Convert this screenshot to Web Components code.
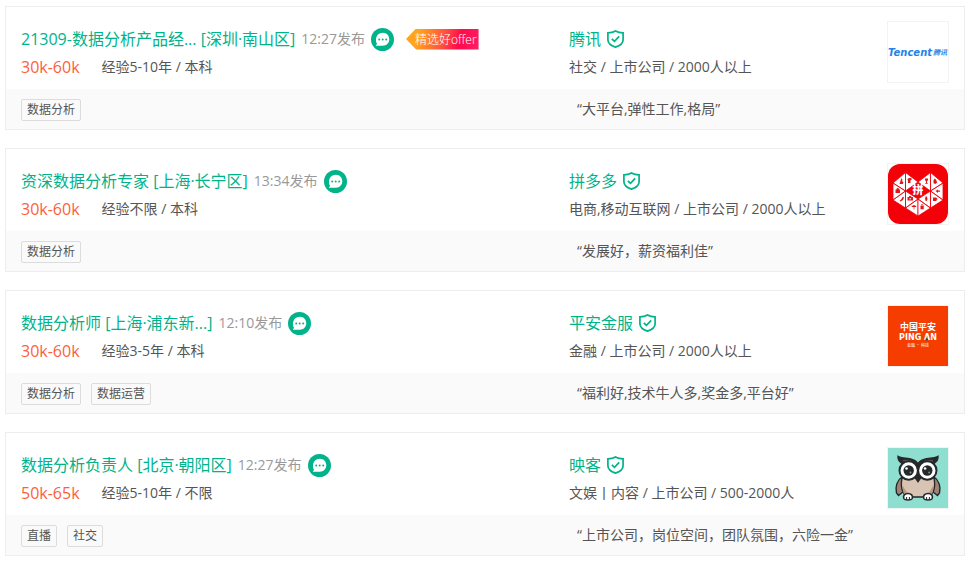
<!DOCTYPE html>
<html lang="zh-CN">
<head>
<meta charset="utf-8">
<title>数据分析职位</title>
<style>
    body {
        margin: 6px 13px 10px 5px;
        background: #fff;
        color: #555;
        font: 400 14px/24px "Open Sans", "Noto Sans CJK SC", sans-serif;
    }
</style>
</head>
<body>

<job-list>
    <job-card salary="30k-60k" time="12:27发布" badge="精选好offer">
        <span slot="title">21309-数据分析产品经... [深圳·南山区]</span>
        <span slot="require">经验5-10年 / 本科</span>
        <span slot="company">腾讯</span>
        <span slot="industry">社交 / 上市公司 / 2000人以上</span>
        <company-logo slot="logo" name="tencent"></company-logo>
        <job-tag slot="tags">数据分析</job-tag>
        <span slot="benefit">“大平台,弹性工作,格局”</span>
    </job-card>
    <job-card salary="30k-60k" time="13:34发布">
        <span slot="title">资深数据分析专家 [上海·长宁区]</span>
        <span slot="require">经验不限 / 本科</span>
        <span slot="company">拼多多</span>
        <span slot="industry">电商,移动互联网 / 上市公司 / 2000人以上</span>
        <company-logo slot="logo" name="pinduoduo"></company-logo>
        <job-tag slot="tags">数据分析</job-tag>
        <span slot="benefit">“发展好，薪资福利佳”</span>
    </job-card>
    <job-card salary="30k-60k" time="12:10发布">
        <span slot="title">数据分析师 [上海·浦东新...]</span>
        <span slot="require">经验3-5年 / 本科</span>
        <span slot="company">平安金服</span>
        <span slot="industry">金融 / 上市公司 / 2000人以上</span>
        <company-logo slot="logo" name="pingan"></company-logo>
        <job-tag slot="tags">数据分析</job-tag>
        <job-tag slot="tags">数据运营</job-tag>
        <span slot="benefit">“福利好,技术牛人多,奖金多,平台好”</span>
    </job-card>
    <job-card salary="50k-65k" time="12:27发布">
        <span slot="title">数据分析负责人 [北京·朝阳区]</span>
        <span slot="require">经验5-10年 / 不限</span>
        <span slot="company">映客</span>
        <span slot="industry">文娱丨内容 / 上市公司 / 500-2000人</span>
        <company-logo slot="logo" name="inke"></company-logo>
        <job-tag slot="tags">直播</job-tag>
        <job-tag slot="tags">社交</job-tag>
        <span slot="benefit">“上市公司，岗位空间，团队氛围，六险一金”</span>
    </job-card>
</job-list>

<script>
class JobList extends HTMLElement {
    constructor() {
        super();
        this.attachShadow({ mode: "open" });
        this.shadowRoot.innerHTML = `
        <style>
            :host {
                display: flex;
                flex-direction: column;
                gap: 18px;
            }
        </style>
        <slot></slot>
        `;
    }
}
customElements.define("job-list", JobList);

class JobTag extends HTMLElement {
    constructor() {
        super();
        this.attachShadow({ mode: "open" });
        this.shadowRoot.innerHTML = `
        <style>
            :host {
                display: block;
                padding: 0 5px;
                border: 1px solid #dcdcdc;
                border-radius: 2px;
                font-size: 12px;
                line-height: 20px;
                white-space: nowrap;
            }
        </style>
        <slot></slot>
        `;
    }
}
customElements.define("job-tag", JobTag);

class OfferBadge extends HTMLElement {
    constructor() {
        super();
        this.attachShadow({ mode: "open" });
        this.shadowRoot.innerHTML = `
        <style>
            :host {
                display: block;
                padding: 0 2px 0 9px;
                color: #fff;
                font-size: 12px;
                font-weight: 300;
                line-height: 21px;
                white-space: nowrap;
                background: linear-gradient(105deg, #ffa41c 18%, #ff4f42 52%, #ff0a4c 72%, #ff1e64);
                clip-path: polygon(0 50%, 10px 0, 100% 0, 100% 100%, 10px 100%);
            }
        </style>
        <slot></slot>
        `;
    }
}
customElements.define("offer-badge", OfferBadge);

class ChatButton extends HTMLElement {
    constructor() {
        super();
        this.attachShadow({ mode: "open" });
        this.shadowRoot.innerHTML = `
        <style>
            :host { display: block; }
            button {
                display: block;
                padding: 0;
                border: 0;
                background: none;
                cursor: pointer;
            }
            svg { display: block; }
        </style>
        <button type="button" aria-label="和他聊聊">
            <svg width="23" height="23" viewBox="0 0 23 23">
                <circle cx="11.5" cy="11.5" r="11.5" fill="#00b38a"/>
                <path d="M11.8 4.8c3.900 0 6.500 2.900 6.500 6.500s-2.800 6.500-6.500 6.500H5.300c-.5 0-.5-.4-.2-.7l1-1.100a6.600 6.600 0 0 1-1.100-4.700c.2-3.700 3.100-6.500 6.800-6.500z" fill="#fff"/>
                <circle cx="8.200" cy="11.600" r="1" fill="#00b38a"/>
                <circle cx="11.700" cy="11.600" r="1" fill="#00b38a"/>
                <circle cx="15.200" cy="11.600" r="1" fill="#00b38a"/>
            </svg>
        </button>
        `;
    }
}
customElements.define("chat-button", ChatButton);

class VerifiedIcon extends HTMLElement {
    constructor() {
        super();
        this.attachShadow({ mode: "open" });
        this.shadowRoot.innerHTML = `
        <style>
            :host { display: block; }
            svg { display: block; }
        </style>
        <svg width="17" height="18" viewBox="0 0 17 18" fill="none" stroke="#00b38a" aria-hidden="true">
            <path d="M8.500 .9C6.500 2.100 4 2.800.9 2.900v6.900c0 3.300 3.200 5.900 7.600 7.300 4.400-1.400 7.600-4 7.600-7.300V2.900C13 2.800 10.500 2.100 8.500 .9z" stroke-width="1.700"/>
            <path d="M4.800 8.800l2.700 2.600 4.700-5" stroke-width="1.700"/>
        </svg>
        `;
    }
}
customElements.define("verified-icon", VerifiedIcon);

const LOGOS = {
    tencent: `
        <rect width="60" height="60" fill="#fff"/>
        <text x="0" y="34" font-family="DejaVu Sans, sans-serif" font-size="10" font-weight="700" font-style="italic" fill="#2583e8">Tencent</text>
        <text x="45" y="33" font-size="7" font-weight="700" font-style="italic" fill="#2583e8">腾讯</text>`,
    pinduoduo: `
        <rect width="60" height="60" fill="#fff"/>
        <rect width="60" height="60" rx="12" fill="#f40009"/>
        <g fill="#fff" stroke="#f40009" stroke-width=".8" stroke-linejoin="round">
            <path d="M5 19v17l12.500-9zM5 19L17.500 8.500V27zM17.500 8.500V27L30 18zM5 36l12.500-9v17zM17.500 27v17L30 35zM17.500 44L30 35v17z"/>
            <path d="M55 19v17l-12.500-9zM55 19L42.500 8.500V27zM42.500 8.500V27L30 18zM55 36l-12.500-9v17zM42.500 27v17L30 35zM42.500 44L30 35v17z"/>
        </g>
        <text x="30" y="30" text-anchor="middle" font-size="11" font-weight="900" fill="#fff">拼</text>
        <g fill="#e3141c">
            <path d="M13.500 14l1 2-.5 1 1.500 1.500-.8 1.500h-3.200l.8-2.500z"/>
            <path d="M19.500 15l1.500-1h1.500l1.500 1-1 1.300-.5-.4v3.100h-2.500v-3.100l-.5.4z"/>
            <path d="M7.500 25.500h4.500v3.500H7.500zM8.500 25.500c0-2 2.500-2 2.500 0"/>
            <path d="M11.500 36.500l1.300-.5 2.200-3.500 1 1-1 2.500-2.500 1.500z"/>
            <path d="M19.500 33h1.300l.5-1h1.500l.5 1H25v3.500h-5.500z"/>
            <path d="M23.500 43c.5-2.500 4.500-2.500 5 0h-2.200v2.500h-.6V43z"/>
            <path d="M37 14.500h3v1.500l-1 1.500v1.500h.8v.8h-2.600v-.8h.8v-1.500l-1-1.500z"/>
            <path d="M45.500 16.500l1-2 1.500 1.200 1.200 2.500-1.700 1.800-2-.8z"/>
            <path d="M47.500 27l2.500-1.500v1h2v1.200h-2v1.300z"/>
            <path d="M45 33.500h3.500v.7h.8v1.500h-.8V37H45z"/>
            <path d="M37.500 32.500h1.500l.5 2.500-.8 2h-1l-.6-2z"/>
            <path d="M32.500 41.500h3.200v3.800h-3.200zM33.300 40.300h1.500v.8h-1.500z"/>
        </g>
        <circle cx="22.200" cy="34.800" r=".8" fill="#fff"/>`,
    pingan: `
        <rect width="60" height="60" fill="#f53d00"/>
        <text x="30" y="24" text-anchor="middle" font-size="9" font-weight="700" fill="#fff">中国平安</text>
        <text x="30" y="34" text-anchor="middle" font-family="DejaVu Sans, sans-serif" font-size="8" font-weight="700" fill="#fff">PING AN</text>
        <circle cx="38.800" cy="33.300" r="1.200" fill="#1d5a32"/>
        <text x="30" y="41" text-anchor="middle" font-size="4" font-weight="400" fill="#fff">金融 · 科技</text>`,
    inke: `
        <rect width="60" height="60" fill="#8edfd0"/>
        <path d="M14 29c-5 3-7 10-5.500 16l2 2.500 5-4zM46 29c5 3 7 10 5.500 16l-2 2.500-5-4z" fill="#a18375" stroke="#25292b" stroke-width="1.400"/>
        <path d="M14 30c-2 10 1 17 6 19h20c5-2 8-9 6-19l-16-5z" fill="#d9c3b3" stroke="#25292b" stroke-width="1.400"/>
        <path d="M15 38c-1 5 1 9 4 11h5c-4-3-7-7-9-11zM45 38c1 5-1 9-4 11h-5c4-3 7-7 9-11z" fill="#b79683"/>
        <path d="M9.500 7c3 3 9 2 14 3.500 3 .8 5 2.200 6.500 4 1.500-1.800 3.500-3.200 6.500-4 5-1.500 11-.5 14-3.500.8 4-1 7-3.500 8.500L30 34 13 15.500C10.500 14 8.700 11 9.500 7z" fill="#25292b"/>
        <path d="M15 13c5-1.800 10 0 13 4M45 13c-5-1.800-10 0-13 4" fill="none" stroke="#61615f" stroke-width="1"/>
        <circle cx="20.700" cy="22.500" r="9.200" fill="#fff" stroke="#25292b" stroke-width="2"/>
        <circle cx="39.300" cy="22.500" r="9.200" fill="#fff" stroke="#25292b" stroke-width="2"/>
        <circle cx="20.700" cy="22.500" r="5.200" fill="#25292b"/>
        <circle cx="39.300" cy="22.500" r="5.200" fill="#25292b"/>
        <circle cx="18.500" cy="20.500" r="1.300" fill="#fff"/>
        <circle cx="37.100" cy="20.500" r="1.300" fill="#fff"/>
        <circle cx="22.500" cy="24.500" r=".9" fill="#87908f"/>
        <circle cx="41.100" cy="24.500" r=".9" fill="#87908f"/>
        <path d="M27.500 31l2.500-1.500 2.500 1.500-2.500 4z" fill="#25292b"/>
        <path d="M15.800 50.500c-1-3 1-5 4.200-5s5.200 2 4.200 5c-1 2-7.400 2-8.400 0zM35.800 50.500c-1-3 1-5 4.200-5s5.200 2 4.200 5c-1 2-7.400 2-8.400 0z" fill="#fff" stroke="#25292b" stroke-width="1.600"/>
        <path d="M18.600 52v-3M21.400 52v-3M38.600 52v-3M41.400 52v-3" stroke="#25292b"/>`
};

class CompanyLogo extends HTMLElement {
    constructor() {
        super();
        this.attachShadow({ mode: "open" });
    }

    connectedCallback() {
        this.shadowRoot.innerHTML = `
        <style>
            :host {
                display: block;
                border: 1px solid #f3f3f3;
            }
            svg {
                display: block;
                font-family: "Noto Sans CJK SC", sans-serif;
            }
        </style>
        <svg width="60" height="60" viewBox="0 0 60 60">${LOGOS[this.getAttribute("name")]}</svg>
        `;
    }
}
customElements.define("company-logo", CompanyLogo);

class JobCard extends HTMLElement {
    constructor() {
        super();
        this.attachShadow({ mode: "open" });
    }

    connectedCallback() {
        const badge = this.getAttribute("badge");
        this.shadowRoot.innerHTML = `
        <style>
            :host {
                display: block;
                border: 1px solid #ededed;
            }
            .top, .bottom {
                display: grid;
                grid-template-columns: minmax(0, 1fr) 380px;
                padding: 0 15px;
            }
            .top {
                padding-top: 14px;
                padding-bottom: 6px;
            }
            .bottom {
                align-items: center;
                min-height: 40px;
                background: #fafafa;
            }
            .position, .about {
                display: flex;
                flex-direction: column;
                gap: 4px;
                padding-top: 6px;
            }
            .company {
                display: flex;
                justify-content: space-between;
            }
            .row {
                display: flex;
                align-items: center;
                gap: 6px;
                height: 24px;
                white-space: nowrap;
            }
            a {
                color: #00b38a;
                font-size: 16px;
                text-decoration: none;
            }
            .time { color: #999; }
            offer-badge { margin-left: 6px; }
            .detail { gap: 22px; }
            .salary {
                color: #fd5f39;
                font-size: 16px;
            }
            .tags {
                display: flex;
                gap: 10px;
                padding-top: 2px;
            }
            .benefit { padding-left: 8px; }
        </style>
        <div class="top">
            <div class="position">
                <div class="row">
                    <a href="#"><slot name="title"></slot></a>
                    <span class="time">${this.getAttribute("time")}</span>
                    <chat-button></chat-button>
                    ${badge ? `<offer-badge>${badge}</offer-badge>` : ""}
                </div>
                <div class="row detail">
                    <span class="salary">${this.getAttribute("salary")}</span>
                    <slot name="require"></slot>
                </div>
            </div>
            <div class="company">
                <div class="about">
                    <div class="row">
                        <a href="#"><slot name="company"></slot></a>
                        <verified-icon></verified-icon>
                    </div>
                    <div class="row"><slot name="industry"></slot></div>
                </div>
                <slot name="logo"></slot>
            </div>
        </div>
        <div class="bottom">
            <div class="tags"><slot name="tags"></slot></div>
            <div class="benefit"><slot name="benefit"></slot></div>
        </div>
        `;
    }
}
customElements.define("job-card", JobCard);
</script>
</body>
</html>
